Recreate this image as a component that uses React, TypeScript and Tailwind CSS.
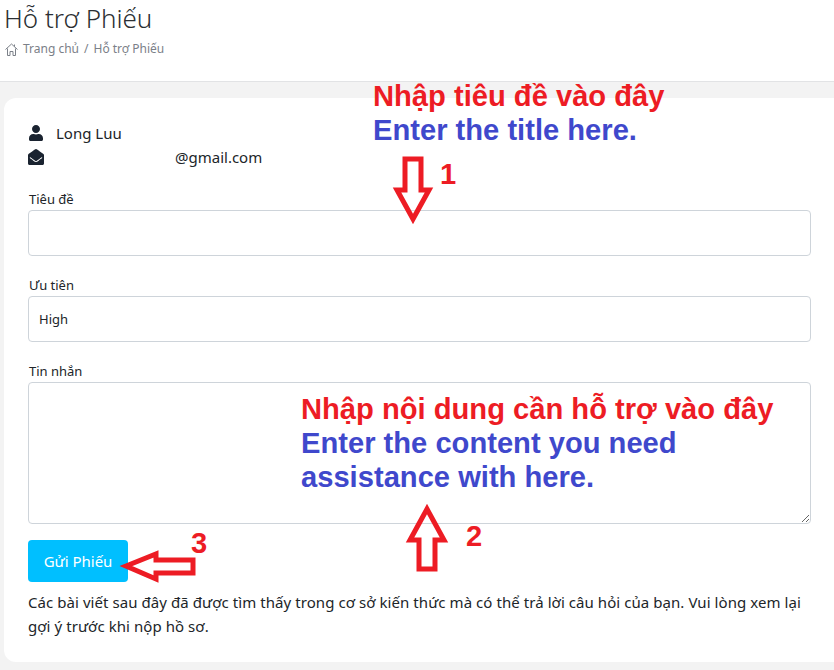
import { FaUser, FaEnvelopeOpen } from 'react-icons/fa';

function Field({ label, children }: { label: string; children: React.ReactNode }) {
  return (
    <div>
      <label className="block text-[13px] leading-[20px] text-[#212529] pl-px mb-[1px]">{label}</label>
      {children}
    </div>
  );
}

function Overlays() {
  const note = "absolute font-['Liberation_Sans',sans-serif] font-bold text-[29.15px] leading-[34px] whitespace-nowrap";
  return (
    <>
      <div className={`${note} left-[373px] top-[79px]`}>
        <div className="text-[#ed1c24]">Nhập tiêu đề vào đây</div>
        <div className="text-[#3f48cc]">Enter the title here.</div>
      </div>
      <div className={`${note} left-[301px] top-[392px]`}>
        <div className="text-[#ed1c24]">Nhập nội dung cần hỗ trợ vào đây</div>
        <div className="text-[#3f48cc]">Enter the content you need</div>
        <div className="text-[#3f48cc]">assistance with here.</div>
      </div>
      <span className={`${note} left-[440px] top-[157px] text-[#ed1c24]`}>1</span>
      <span className={`${note} left-[466px] top-[519px] text-[#ed1c24]`}>2</span>
      <span className={`${note} left-[191px] top-[526px] text-[#ed1c24]`}>3</span>
      <svg className="absolute pointer-events-none left-0 top-0" width="834" height="670" fill="none" stroke="#ed1c24" strokeWidth="5" strokeLinejoin="miter">
        <path d="M405 159H421V190H429L413 219L397 190H405Z" />
        <path d="M427 509L444 540H435V569H419V540H410Z" />
        <path d="M126 566L156 554V560H193V573H156V579Z" />
      </svg>
    </>
  );
}

export default function App() {
  return (
    <div className="relative w-[834px] h-[670px] overflow-hidden bg-[#f3f3f3] font-['Noto_Sans',sans-serif] text-[#212529]">
      <header className="h-[82px] bg-white border-b border-[#e2e3e5] pl-[5px]">
        <h1 className="-ml-px text-[26px] leading-[36px] font-light text-[#2b2f33]">Hỗ trợ Phiếu</h1>
        <nav className="flex items-center gap-[5px] mt-[4px] text-[12px] leading-[18px] text-[#7b8088]">
          <svg width="13" height="13" viewBox="0 0 13 13" fill="none" stroke="#7b8088" strokeWidth="1">
            <path d="M0.5 6.5L6.5 1L12.5 6.5" />
            <path d="M2.5 5.5V12.5H5V8.5H8V12.5H10.5V5.5" />
            <path d="M9.5 1.5V3.5" />
          </svg>
          <span>Trang chủ</span>
          <span>/</span>
          <span>Hỗ trợ Phiếu</span>
        </nav>
      </header>

      <main className="mt-4 ml-1 h-[564px] bg-white rounded-l-xl pl-6 pr-6 pt-[23px]">
        <div className="text-[15px] leading-[24px] text-[#212529]">
          <div className="flex items-center">
            <FaUser size={16} className="text-[#1a2330]" />
            <span className="ml-[12px]">Long Luu</span>
          </div>
          <div className="flex items-center">
            <FaEnvelopeOpen size={16} className="text-[#1a2330]" />
            <span className="ml-[131px]">@gmail.com</span>
          </div>
        </div>

        <form className="mt-[20px] flex flex-col gap-[19px]">
          <Field label="Tiêu đề">
            <input className="block w-[783px] h-[46px] rounded border border-[#ced4da] bg-white" />
          </Field>
          <Field label="Ưu tiên">
            <div className="flex items-center w-[783px] h-[46px] rounded border border-[#ced4da] pl-[10px] pt-[1px] text-[13px] text-[#212529]">High</div>
          </Field>
          <Field label="Tin nhắn">
            <textarea className="block w-[783px] h-[142px] rounded border border-[#ced4da] bg-white" />
          </Field>
        </form>

        <button className="mt-4 block w-[100px] h-[42px] rounded bg-[#00bfff] text-white text-[15px]">Gửi Phiếu</button>
        <p className="mt-[8px] w-[784px] text-[15px] tracking-[0.065px] leading-[24px] text-[#212529]">
          Các bài viết sau đây đã được tìm thấy trong cơ sở kiến thức mà có thể trả lời câu hỏi của bạn. Vui lòng xem lại gợi ý trước khi nộp hồ sơ.
        </p>
      </main>

      <Overlays />
    </div>
  );
}
